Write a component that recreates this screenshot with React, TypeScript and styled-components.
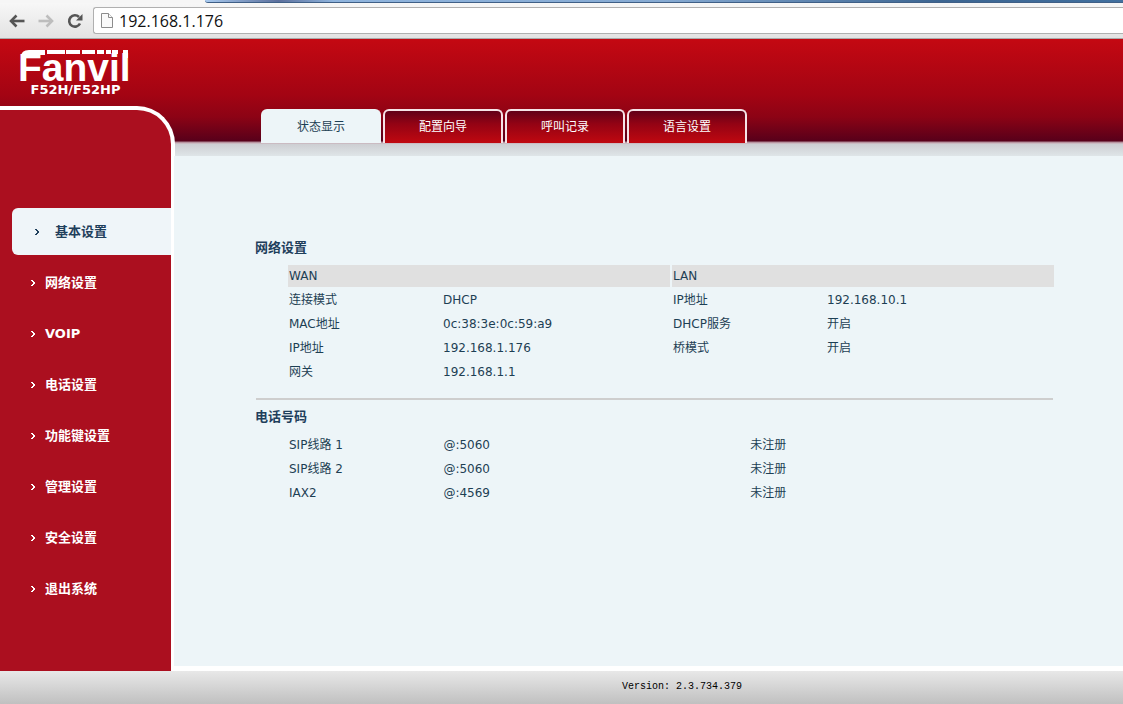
import React from "react";
import styled, { createGlobalStyle, css } from "styled-components";

const GlobalStyle = createGlobalStyle`
  *, *::before, *::after { box-sizing: border-box; }
  body {
    margin: 0;
    font: 12px/16px "DejaVu Sans", Verdana, "Noto Sans CJK SC", sans-serif;
    color: #1d3f54;
  }
  ul { list-style: none; margin: 0; padding: 0; }
  a { color: inherit; text-decoration: none; }
`;

const Window = styled.div`
  display: flex;
  flex-direction: column;
  min-height: 100vh;
`;

/* browser chrome */

const TabStrip = styled.div`
  height: 3px;
  padding-left: 205px;
  background: #f6f6f6;
`;

const TabStripEdge = styled.div`
  height: 3px;
  border-bottom: 1px solid #3f5f86;
  border-radius: 0 0 0 3px;
  background: linear-gradient(90deg, #a9cbf0, #5b6f9c 8%, #8fb4dd 14%, #86aad2 50%, #3c6591 80%, #41709f);
`;

const Toolbar = styled.form`
  display: flex;
  align-items: center;
  height: 36px;
  padding-left: 2px;
  background: linear-gradient(#f7f7f7, #e3e3e3);
  border-bottom: 1px solid #a9a9a9;
`;

const ToolButton = styled.button`
  display: flex;
  align-items: center;
  justify-content: center;
  width: 29px;
  height: 24px;
  padding: 0;
  border: 0;
  background: none;
  color: #555;

  &:disabled { color: #bdbdbd; }
`;

const AddressBox = styled.label`
  display: flex;
  flex: 1;
  align-items: center;
  gap: 6px;
  height: 27px;
  margin-left: 4px;
  padding-left: 7px;
  background: #fff;
  border: 1px solid #b0b0b0;
  border-right: 0;
  border-radius: 3px 0 0 3px;
`;

const AddressInput = styled.input`
  flex: 1;
  min-width: 0;
  height: 24px;
  padding: 0;
  border: 0;
  outline: 0;
  background: none;
  color: #111;
  font: 16px/24px "Open Sans", sans-serif;
`;

/* page frame */

const Page = styled.div`
  display: grid;
  grid-template-columns: 174px minmax(0, 1fr);
  flex: 1;
  background:
    linear-gradient(#c40812 0, #a30413 56px, #8c0315 78px, #58001a 102px, #a8808e 103px, #c8a8b2 104px, #cdced2 105px, #dfe5e8 117px, transparent 117px)
    #edf5f8;
`;

const Side = styled.div`
  display: flex;
  flex-direction: column;
`;

const Brand = styled.header`
  height: 67px;
  padding: 9px 0 0 20px;
  color: #fff;
`;

const Logo = styled.svg`
  display: block;
  overflow: visible;
`;

const Model = styled.div`
  width: 111px;
  padding-top: 1px;
  font-size: 13px;
  font-weight: bold;
  line-height: 16px;
  text-align: center;
`;

const SideCap = styled.div`
  height: 50px;
  margin-right: -1px;
  border: solid #fff;
  border-width: 4px 4px 0 0;
  border-radius: 0 38px 0 0;
  background: #ab0f1f;
`;

const SideMenu = styled.nav`
  flex: 1;
  padding: 52px 0 52px 12px;
  border-right: 3px solid #fff;
  background: #ab0f1f;
`;

const SideLink = styled.a<{ $active?: boolean }>`
  display: flex;
  align-items: center;
  gap: 10px;
  height: 51px;
  padding-left: 19px;
  color: #fff;
  font-size: 13px;
  font-weight: bold;

  ${(p) =>
    p.$active &&
    css`
      gap: 16px;
      height: 47px;
      margin-bottom: 2px;
      padding-left: 23px;
      border-radius: 6px 0 0 6px;
      background: #eff5f9;
      color: #1f3f5c;
    `}
`;

const Main = styled.main`
  display: flex;
  flex-direction: column;
  border-bottom: 5px solid #fff;
`;

const Tabs = styled.nav`
  display: flex;
  gap: 2px;
  padding: 70px 0 0 87px;
`;

const Tab = styled.a<{ $active?: boolean }>`
  width: 120px;
  height: 34px;
  border: 2px solid #f6e4e8;
  border-bottom: 0;
  border-radius: 6px 6px 0 0;
  background: linear-gradient(#620018, #930314 40%, #c00810);
  color: #fff;
  line-height: 32px;
  text-align: center;

  ${(p) =>
    p.$active &&
    css`
      border-color: #edf5f8;
      background: #edf5f8;
      color: #1d3f54;
    `}
`;

const Content = styled.div`
  padding: 95px 70px 119px 81px;
`;

const Heading = styled.h2`
  margin: 0;
  color: #1f3f5c;
  font-size: 13px;
  line-height: 20px;
`;

const Grid = styled.table`
  width: calc(100% - 28px);
  margin: 5px 0 0 31px;
  table-layout: fixed;
  border-spacing: 2px;

  th, td {
    height: 22px;
    padding: 0 1px;
    font-weight: normal;
    text-align: left;
  }
  thead th { background: #e0e0e0; }
`;

const Rule = styled.hr`
  height: 2px;
  margin: 13px 0 7px 1px;
  border: 0;
  background: #cecece;
`;

const Footer = styled.footer`
  height: 33px;
  padding-left: 241px;
  background: linear-gradient(#e8e8e8, #c0c0c0);
  color: #000;
  font: 10px/31px "Liberation Mono", monospace;
  text-align: center;
`;

const ChevronIcon = () => (
  <svg width="4" height="6" viewBox="0 0 4 6" fill="currentColor" aria-hidden="true">
    <path d="M0 0h2v1h1v1h1v2H3v1H2v1H0V5h1V4h1V2H1V1H0z" />
  </svg>
);

const menu = ["基本设置", "网络设置", "VOIP", "电话设置", "功能键设置", "管理设置", "安全设置", "退出系统"];
const tabs = ["状态显示", "配置向导", "呼叫记录", "语言设置"];
const network = [
  ["连接模式", "DHCP", "IP地址", "192.168.10.1"],
  ["MAC地址", "0c:38:3e:0c:59:a9", "DHCP服务", "开启"],
  ["IP地址", "192.168.1.176", "桥模式", "开启"],
  ["网关", "192.168.1.1", "", ""],
];
const lines = [
  ["SIP线路 1", "@:5060", "未注册"],
  ["SIP线路 2", "@:5060", "未注册"],
  ["IAX2", "@:4569", "未注册"],
];

export default function App() {
  return (
    <Window>
      <GlobalStyle />
      <TabStrip><TabStripEdge /></TabStrip>
      <Toolbar onSubmit={(e) => e.preventDefault()}>
        <ToolButton type="button" aria-label="后退">
          <svg width="16" height="14" viewBox="0 0 16 14" fill="none" stroke="currentColor" strokeWidth="2.6">
            <path d="M3 7h12.5" />
            <path d="M7.5 1.5L2 7L7.5 12.5" />
          </svg>
        </ToolButton>
        <ToolButton type="button" aria-label="前进" disabled>
          <svg width="16" height="14" viewBox="0 0 16 14" fill="none" stroke="currentColor" strokeWidth="2.6">
            <path d="M.5 7H13" />
            <path d="M8.5 1.5L14 7L8.5 12.5" />
          </svg>
        </ToolButton>
        <ToolButton type="button" aria-label="刷新">
          <svg width="16" height="16" viewBox="0 0 16 16" fill="none">
            <path d="M13 10.5A5.7 5.7 0 1 1 12 4" stroke="currentColor" strokeWidth="2.6" />
            <path d="M15.5 1v6.5H9z" fill="currentColor" />
          </svg>
        </ToolButton>
        <AddressBox>
          <svg width="12" height="15" viewBox="0 0 12 15" fill="#fafafa" stroke="#8c8c8c" aria-hidden="true">
            <path d="M.5.5h7l4 4v10H.5z" />
            <path d="M7.5.5v4h4" />
          </svg>
          <AddressInput aria-label="地址" defaultValue="192.168.1.176" />
        </AddressBox>
      </Toolbar>

      <Page>
        <Side>
          <Brand>
            <Logo width="112" height="33" viewBox="0 0 112 33" fill="#fff" role="img" aria-label="Fanvil">
              <path d="M1 14V9Q1 2 9 2H25V7H6V14zM27 2H45V6H27zM46 2H60V6H46zM62 2H75V6H62zM77 2H84V6H77zM86 2H91V6H86zM92 2H98V6H92zM103 2H108V10H103z" />
              <text x="-2" y="33" fontFamily="Liberation Sans, sans-serif" fontSize="39" fontWeight="bold">Fanvil</text>
            </Logo>
            <Model>F52H/F52HP</Model>
          </Brand>
          <SideCap />
          <SideMenu aria-label="菜单">
            <ul>
              {menu.map((label, i) => (
                <li key={label}>
                  <SideLink href="#" $active={i === 0}>
                    <ChevronIcon />
                    {label}
                  </SideLink>
                </li>
              ))}
            </ul>
          </SideMenu>
        </Side>

        <Main>
          <Tabs>
            {tabs.map((label, i) => (
              <Tab key={label} href="#" $active={i === 0}>{label}</Tab>
            ))}
          </Tabs>
          <Content>
            <Heading>网络设置</Heading>
            <Grid>
              <colgroup>
                <col width="20%" /><col width="30%" /><col width="20%" /><col width="30%" />
              </colgroup>
              <thead>
                <tr><th colSpan={2}>WAN</th><th colSpan={2}>LAN</th></tr>
              </thead>
              <tbody>
                {network.map((row) => (
                  <tr key={row[0]}>{row.map((cell, i) => <td key={i}>{cell}</td>)}</tr>
                ))}
              </tbody>
            </Grid>
            <Rule />
            <Heading>电话号码</Heading>
            <Grid>
              <colgroup>
                <col width="20%" /><col width="40%" /><col width="40%" />
              </colgroup>
              <tbody>
                {lines.map((row) => (
                  <tr key={row[0]}>{row.map((cell, i) => <td key={i}>{cell}</td>)}</tr>
                ))}
              </tbody>
            </Grid>
          </Content>
        </Main>
      </Page>
      <Footer>Version: 2.3.734.379</Footer>
    </Window>
  );
}
